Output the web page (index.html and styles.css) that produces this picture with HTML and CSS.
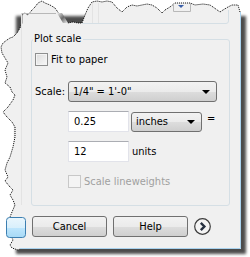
FILE: index.html
```html
<!DOCTYPE html>
<html lang="en">
<head>
    <meta charset="UTF-8">
    <title>Plot scale</title>
    <link rel="stylesheet" href="styles.css">
</head>
<body>
<div class="stage">
    <!-- torn screenshot edge, shadow and cut-off fragments of the dialog -->
    <svg class="paper" width="250" height="257" viewBox="0 0 250 257">
        <defs>
            <filter id="soft" x="-10%" y="-10%" width="130%" height="130%">
                <feGaussianBlur stdDeviation="1.6"/>
            </filter>
            <linearGradient id="fold" x1="0" y1="0" x2="1" y2="1">
                <stop offset="0" stop-color="#f0f0f0"/>
                <stop offset="0.5" stop-color="#6a6a6a"/>
                <stop offset="1" stop-color="#f0f0f0"/>
            </linearGradient>
            <linearGradient id="okbtn" x1="0" y1="0" x2="0" y2="1">
                <stop offset="0" stop-color="#eaf6fd"/>
                <stop offset="0.5" stop-color="#d9f0fc"/>
                <stop offset="0.51" stop-color="#bee6fd"/>
                <stop offset="1" stop-color="#a7d9f5"/>
            </linearGradient>
        </defs>
        <rect x="16" y="16" width="230" height="238" fill="#000" opacity="0.7" filter="url(#soft)"/>
        <polygon fill="#f0f0f0" points="240,12 238,5 232,5 228,7 223,10 220,12 213,7 210,5 203,4 195,5 190,3 175,3 170,7 165,10 162,13 157,8 152,5 147,4 142,5 137,6 132,5 127,7 122,12 117,8 112,2 107,1 102,2 97,1 92,2 88,8 85,15 82,23 78,23 73,22 68,23 62,18 55,8 50,5 45,3 42,1 38,3 35,7 32,10 28,15 25,13 22,15 22,23 20,28 17,33 13,37 10,38 7,40 3,43 1,47 2,53 5,58 8,63 5,70 7,77 5,83 10,87 12,92 15,95 13,100 8,107 3,112 7,117 12,122 15,127 15,137 13,147 10,157 7,163 5,170 8,177 5,181 10,187 13,190 10,195 13,200 15,205 12,212 10,217 8,225 9,232 13,240 10,245 12,248 18,250 20,249 241,249 241,12"/>
        <polyline fill="none" stroke="#000" stroke-width="1" stroke-dasharray="1 1" points="240,12 238,5 232,5 228,7 223,10 220,12 213,7 210,5 203,4 195,5 190,3 175,3 170,7 165,10 162,13 157,8 152,5 147,4 142,5 137,6 132,5 127,7 122,12 117,8 112,2 107,1 102,2 97,1 92,2 88,8 85,15 82,23 78,23 73,22 68,23 62,18 55,8 50,5 45,3 42,1 38,3 35,7 32,10 28,15 25,13 22,15 22,23 20,28 17,33 13,37 10,38 7,40 3,43 1,47 2,53 5,58 8,63 5,70 7,77 5,83 10,87 12,92 15,95 13,100 8,107 3,112 7,117 12,122 15,127 15,137 13,147 10,157 7,163 5,170 8,177 5,181 10,187 13,190 10,195 13,200 15,205 12,212 10,217 8,225 9,232 13,240 10,245 12,248 18,250 20,249"/>
        <path d="M240.5 12 V248.5 H20" fill="none" stroke="#a9d2ee"/>
        <path d="M228.5 10 V21 Q228.5 23.5 226 23.5 H82" fill="none" stroke="#d5dfe5"/>
        <path d="M21.5 13.5 H56" fill="none" stroke="#b8b8b8"/>
        <path d="M21.5 14 V205" fill="none" stroke="#e3e3e3"/>
        <path d="M92.5 3 V23 M98.5 3 V23" fill="none" stroke="#e3e3e3"/>
        <polygon points="57,13 62,13 68,23 63,23" fill="url(#fold)"/>
        <path d="M173.5 3 V11.5 H190.5 V3" fill="none" stroke="#b8b8b8"/>
        <polygon points="178,5 184,5 181,8" fill="#3a5fa8"/>
        <rect x="6.5" y="217.5" width="19" height="20" rx="3" fill="url(#okbtn)" stroke="#3c7fb1"/>
    </svg>

    <div class="dialog">
        <div class="group">
            <span class="group-title">Plot scale</span>
            <label class="check">
                <span class="box"></span>
                <span>Fit to paper</span>
            </label>
            <div class="row scale-row">
                <span class="label">Scale:</span>
                <div class="combo combo-wide">
                    <span>1/4" = 1'-0"</span>
                    <span class="arrow"></span>
                </div>
            </div>
            <div class="row field-row">
                <div class="field">0.25</div>
                <div class="combo combo-unit">
                    <span>inches</span>
                    <span class="arrow"></span>
                </div>
                <span class="equals">=</span>
            </div>
            <div class="row field-row">
                <div class="field">12</div>
                <span class="units">units</span>
            </div>
            <label class="check check-disabled">
                <span class="box"></span>
                <span>Scale lineweights</span>
            </label>
        </div>

        <div class="buttons">
            <button class="button">Cancel</button>
            <button class="button">Help</button>
            <span class="more">
                <svg width="17" height="17" viewBox="0 0 17 17">
                    <circle cx="8.5" cy="8.5" r="7.8" fill="#f4f4f4" stroke="#3c3c3c" stroke-width="1.2"/>
                    <path d="M6.8 4.8 L10.4 8.5 L6.8 12.2" fill="none" stroke="#263040" stroke-width="2.4"/>
                </svg>
            </span>
        </div>
    </div>
</div>
</body>
</html>
```

FILE: styles.css
```css
/* Plot scale dialog fragment */
body {
    margin: 0;
    background: #FFFFFF;
    font-family: 'DejaVu Sans Condensed', 'Liberation Sans', sans-serif;
    font-size: 11px;
    color: #000000;
}

.stage {
    position: relative;
    width: 250px;
    height: 257px;
    overflow: hidden;
}

.paper {
    position: absolute;
    left: 0;
    top: 0;
}

.dialog {
    position: relative;
    padding: 39px 0 0 31px;
}

.group {
    position: relative;
    box-sizing: content-box;
    width: 194px;
    height: 152px;
    padding: 13px 0 0 3px;
    border: 1px solid #d5dfe5;
    border-radius: 3px;
}

.group-title {
    position: absolute;
    left: 1px;
    top: -8px;
    padding: 0 2px 0 1px;
    background: #f0f0f0;
    line-height: 14px;
}

.check {
    display: flex;
    align-items: center;
    gap: 3px;
    height: 13px;
}

.box {
    width: 11px;
    height: 11px;
    border: 1px solid #8e8f8f;
    background: linear-gradient(135deg, #dcdcdc, #f8f8f8);
    box-shadow: inset 0 0 0 1px #f4f4f4;
}

.check-disabled {
    margin-top: 13px;
    margin-left: 33px;
    color: #a0a0a0;
}

.check-disabled .box {
    border-color: #c8c8c8;
    background: #f4f4f4;
}

.row {
    display: flex;
    align-items: center;
}

.scale-row {
    margin-top: 15px;
}

.label {
    width: 33px;
}

.combo {
    display: flex;
    align-items: center;
    justify-content: space-between;
    box-sizing: border-box;
    border: 1px solid #707070;
    border-radius: 3px;
    background: linear-gradient(#f2f2f2 0%, #ebebeb 50%, #dddddd 51%, #cfcfcf 100%);
    padding: 0 6px 0 4px;
}

.combo-wide {
    width: 149px;
    height: 21px;
}

.combo-unit {
    width: 71px;
    height: 20px;
    margin-left: 2px;
}

.arrow {
    width: 0;
    height: 0;
    border-left: 4px solid transparent;
    border-right: 4px solid transparent;
    border-top: 4px solid #000000;
}

.field-row {
    margin-top: 9px;
    margin-left: 33px;
}

.field {
    box-sizing: border-box;
    width: 61px;
    height: 21px;
    padding: 3px 0 0 5px;
    background: #FFFFFF;
    border: 1px solid #e2e3ea;
    border-top-color: #abadb3;
}

.equals {
    align-self: flex-start;
    margin-top: 1px;
    margin-left: 5px;
}

.units {
    margin-left: 3px;
}

.buttons {
    display: flex;
    align-items: center;
    gap: 6px;
    margin-top: 10px;
    margin-left: 1px;
}

.button {
    width: 75px;
    height: 21px;
    padding: 0;
    font-family: inherit;
    font-size: 11px;
    color: #000000;
    border: 1px solid #707070;
    border-radius: 3px;
    background: linear-gradient(#f2f2f2 0%, #ebebeb 50%, #dddddd 51%, #cfcfcf 100%);
}

.more {
    display: flex;
}
```
